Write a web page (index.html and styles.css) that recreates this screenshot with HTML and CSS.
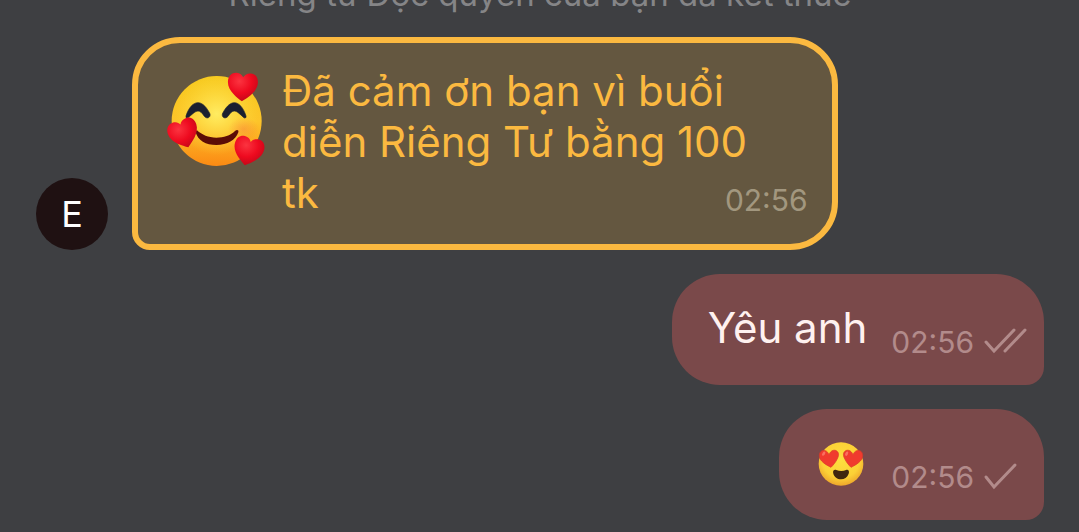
FILE: index.html
```html
<!DOCTYPE html>
<html lang="vi">
<head>
<meta charset="utf-8">
<meta name="viewport" content="width=device-width, initial-scale=1">
<title>Chat</title>
<link rel="stylesheet" href="styles.css">
</head>
<body>
<main class="chat">
  <p class="notice">Riêng tư Độc quyền của bạn đã kết thúc</p>

  <article class="row">
    <div class="avatar">E</div>
    <div class="bubble bubble-tip">
      <svg class="tip-emoji" viewBox="39 36 288 288" role="img" aria-label="🥰">
        <defs>
          <linearGradient id="face" x1="0" y1="0" x2="0" y2="1">
            <stop offset="0" stop-color="#f6c81c"/>
            <stop offset=".5" stop-color="#fdc52a"/>
            <stop offset="1" stop-color="#fb8a14"/>
          </linearGradient>
          <radialGradient id="glow" cx=".5" cy=".42" r=".46">
            <stop offset="0" stop-color="#ffec62"/>
            <stop offset="1" stop-color="#ffe040" stop-opacity="0"/>
          </radialGradient>
          <radialGradient id="blush">
            <stop offset="0" stop-color="#f97c3c" stop-opacity=".45"/>
            <stop offset="1" stop-color="#f97c3c" stop-opacity="0"/>
          </radialGradient>
          <radialGradient id="heart" cx=".38" cy=".3" r=".75">
            <stop offset="0" stop-color="#fb3440"/>
            <stop offset=".55" stop-color="#ee0a1f"/>
            <stop offset="1" stop-color="#c00718"/>
          </radialGradient>
          <path id="heart-shape" d="M0 43C-14 33-45 14-45-14C-45-32-34-42-21-42C-10-42-3-36 0-29C3-36 11-42 22-42C36-42 45-31 45-15C45 13 14 33 0 43Z"/>
        </defs>
        <circle cx="185" cy="183" r="135" fill="url(#face)"/>
        <circle cx="185" cy="183" r="135" fill="url(#glow)"/>
        <ellipse cx="266" cy="207" rx="46" ry="36" fill="url(#blush)"/>
        <path d="M93 168C101 143 114 128 129 128C144 128 157 145 165 162C167 173 156 178 148 169C141 158 135 153 129 153C121 153 110 164 101 172C96 176 92 174 93 168Z" fill="#1b2030" stroke="#1b2030" stroke-width="2"/>
        <path d="M273 168C265 143 252 128 238 128C223 128 210 145 202 162C200 173 211 178 219 169C226 158 232 153 238 153C246 153 257 164 265 172C270 176 274 174 273 168Z" fill="#1b2030" stroke="#1b2030" stroke-width="2"/>
        <path d="M121 214C128 243 153 255 184 255C217 255 242 240 250 217C252 209 245 208 240 213C225 227 207 233 184 233C160 233 141 225 126 211Z" fill="#5c0c06"/>
        <use href="#heart-shape" transform="translate(263 81) rotate(3)" fill="url(#heart)"/>
        <use href="#heart-shape" transform="translate(86 221) rotate(-19)" fill="url(#heart)"/>
        <use href="#heart-shape" transform="translate(280 274) rotate(14)" fill="url(#heart)"/>
      </svg>
      <div class="tip-body">
        <p class="text">Đã cảm ơn bạn vì buổi diễn Riêng Tư bằng 100 tk</p>
        <time class="time">02:56</time>
      </div>
    </div>
  </article>

  <article class="row row-own">
    <div class="bubble bubble-own">
      <p class="text">Yêu anh</p>
      <div class="meta">
        <time class="time">02:56</time>
        <svg class="ticks" viewBox="0 0 42 36" role="img" aria-label="Đã xem"><path d="M2 18L10 27L30 6M21 27L41 6"/></svg>
      </div>
    </div>
  </article>

  <article class="row row-own">
    <div class="bubble bubble-own">
      <p class="text">
        <svg class="emoji" viewBox="15 6 156 153" role="img" aria-label="😍">
          <defs>
            <radialGradient id="face-small" cx=".5" cy=".4" r=".6">
              <stop offset="0" stop-color="#fddf3f"/>
              <stop offset=".7" stop-color="#fcd136"/>
              <stop offset="1" stop-color="#eea72c"/>
            </radialGradient>
          </defs>
          <ellipse cx="93" cy="87" rx="67" ry="65" fill="url(#face-small)"/>
          <path d="M63 97C47 89 28 78 28 62C28 50 36 44 46 47C52 49 55 54 57 59C60 51 67 44 76 46C86 49 88 59 83 69C78 81 70 90 63 97Z" fill="#f03b2e" stroke="#d93a27" stroke-width="2"/>
          <path d="M123 97C139 89 158 78 158 62C158 50 150 44 140 47C134 49 131 54 129 59C126 51 119 44 110 46C100 49 98 59 103 69C108 81 116 90 123 97Z" fill="#f03b2e" stroke="#d93a27" stroke-width="2"/>
          <ellipse cx="41" cy="56" rx="4" ry="7" transform="rotate(35 41 56)" fill="#f97060"/>
          <ellipse cx="110" cy="56" rx="4" ry="7" transform="rotate(25 110 56)" fill="#f97060"/>
          <path d="M79 105C88 109 100 109 108 105C115 102 119 109 116 116C112 127 103 133 93 133C82 133 73 126 70 116C67 107 73 102 79 105Z" fill="#40270f"/>
        </svg>
      </p>
      <div class="meta">
        <time class="time">02:56</time>
        <svg class="ticks" viewBox="0 0 42 36" role="img" aria-label="Đã gửi"><path d="M2 18L10 28L31 6"/></svg>
      </div>
    </div>
  </article>
</main>
</body>
</html>
```
FILE: styles.css
```css
* {
  box-sizing: border-box;
}

body {
  margin: 0;
  background: #3e3f42;
  font-family: Inter, "Noto Sans", sans-serif;
}

p {
  margin: 0;
}

svg {
  display: block;
  flex: none;
  overflow: visible;
}

.chat {
  display: flex;
  flex-direction: column;
  justify-content: flex-end;
  gap: 24px;
  height: 100vh;
  padding: 0 35px 12px 36px;
  overflow: hidden;
}

.notice {
  color: #858587;
  font-size: 33px;
  line-height: 38px;
  text-align: center;
}

.row {
  display: flex;
  flex: none;
  align-items: flex-end;
  gap: 24px;
}

.row-own {
  justify-content: flex-end;
}

.avatar {
  display: flex;
  flex: none;
  align-items: center;
  justify-content: center;
  width: 72px;
  height: 72px;
  border-radius: 50%;
  background: #1f1112;
  color: #fff;
  font-size: 36px;
}

.bubble {
  display: flex;
  max-width: 70%;
  border-radius: 48px;
}

.text {
  font-size: 42px;
  line-height: 51px;
}

.time {
  font-size: 30px;
  line-height: 36px;
}

.bubble-tip {
  gap: 18px;
  padding: 22px 24px 26px 30px;
  border: 6px solid #fbb940;
  border-bottom-left-radius: 18px;
  background: #645740;
  color: #fbb940;
}

.tip-emoji {
  width: 96px;
  height: 96px;
  margin-top: 7px;
}

.tip-body {
  display: grid;
  flex: 1;
}

.tip-body .text,
.tip-body .time {
  grid-area: 1 / 1;
}

.tip-body .text {
  padding-right: 32px;
}

.tip-body .time {
  align-self: end;
  justify-self: end;
  color: #a2977f;
}

.bubble-own {
  align-items: flex-end;
  gap: 24px;
  padding: 28px 18px 25px 36px;
  border-bottom-right-radius: 18px;
  background: #7a494a;
  color: #fff1ef;
}

.bubble-own .text {
  padding-bottom: 7px;
}

.emoji {
  width: 52px;
  height: 51px;
}

.meta {
  display: flex;
  align-items: center;
  gap: 10px;
  color: #b28b8b;
}

.ticks {
  width: 42px;
  height: 36px;
  fill: none;
  stroke: currentColor;
  stroke-width: 3;
  stroke-linecap: round;
}
```
